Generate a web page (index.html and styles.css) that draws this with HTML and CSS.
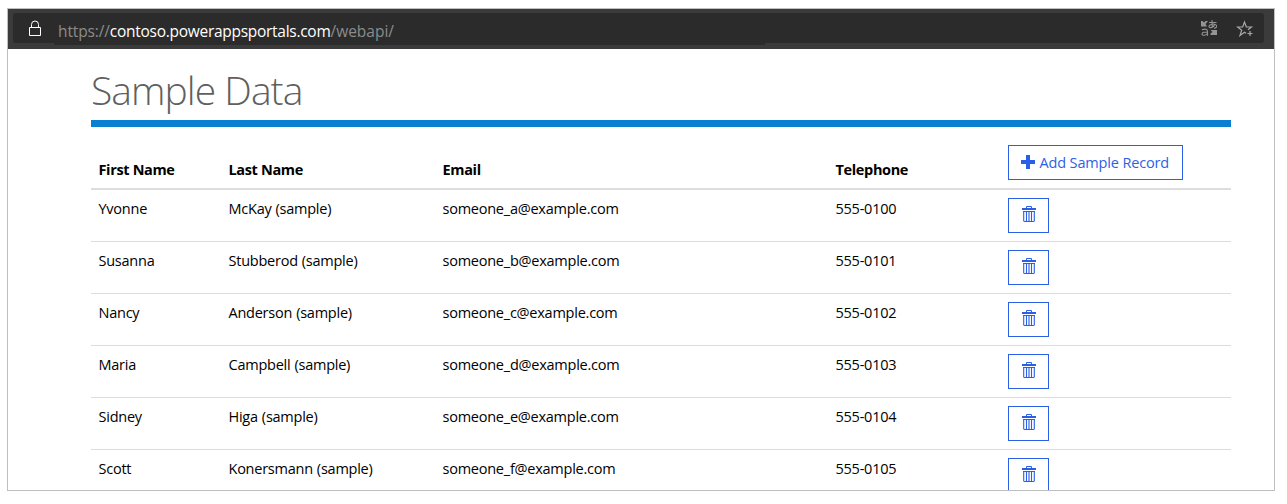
FILE: index.html
```html
<!DOCTYPE html>
<html lang="en">
<head>
<meta charset="utf-8">
<title>Sample Data</title>
<link rel="stylesheet" href="styles.css">
</head>
<body>
<svg class="sprite" aria-hidden="true">
  <symbol id="trash" viewBox="0 0 16 18">
    <path d="M5.500 3V1.500h5V3" fill="none" stroke="currentColor"/>
    <path d="M1 3h14v2H1zM2 6h12v1H2zM3 16h10v1H3z" fill="currentColor"/>
    <path d="M2.700 6v10.500M5.500 6v10.500M8 6v10.500M10.500 6v10.500M13.300 6v10.500" fill="none" stroke="currentColor" stroke-width="1.100"/>
  </symbol>
</svg>
<div class="window">
  <header class="toolbar">
    <div class="address">
      <svg class="lock" viewBox="0 0 14 18"><path d="M1.500 7.500h11v8h-11zM3.500 7.500V4.500a3.500 3.500 0 0 1 7 0v3" fill="none" stroke="currentColor"/></svg>
      <div class="url"><span class="dim scheme">https://</span><span class="host">contoso.powerappsportals.com</span><span class="dim path">/webapi/</span></div>
      <svg class="translate" viewBox="0 0 16 16"><path d="M0 1h1.500L3 2.500 4.500 1H7L4.500 4 6 6.500H0zM16 15h-6.500v-1.500l2-1.500-2-2H16z" fill="currentColor"/><path d="M8 2.500h7.500M11 0c0 3 0 6 .8 7.500M14 4c-1 3.500-6 4.700-6 2.500S14 3 15.300 5.300 14 8 13 8.200M1 9.800c3.500-1.600 5.500-.3 5.500 1.900v4M6.500 12c-3 0-5.500.2-5.500 1.900 0 2 4.500 1.500 5.500-.3" fill="none" stroke="currentColor" stroke-width="1.100"/></svg>
      <svg class="star" viewBox="0 0 18 18"><path d="M10 13.300l-1.500-1L4 15.500l1.700-5.300L1.500 7h5.200L8.500 2l1.800 5h5.200l-3.500 2.800" fill="none" stroke="currentColor" stroke-width="1.200"/><path d="M11.500 13.500h5M14 11v5" fill="none" stroke="currentColor" stroke-width="1.200"/></svg>
    </div>
  </header>
  <main class="page">
    <h1 class="title">Sample Data</h1>
    <table class="records">
      <colgroup><col class="c-first"><col class="c-last"><col class="c-email"><col class="c-phone"><col></colgroup>
      <thead><tr><th>First Name</th><th>Last Name</th><th>Email</th><th>Telephone</th>
      <th class="action"><button class="btn add"><svg class="plus" viewBox="0 0 14 14"><path d="M5 0h4v5h5v4H9v5H5V9H0V5h5z" fill="currentColor"/></svg><span>Add Sample Record</span></button></th></tr></thead>
      <tbody>
        <tr><td>Yvonne</td><td>McKay (sample)</td><td>someone_a@example.com</td><td>555-0100</td><td class="action"><button class="btn del"><svg class="trash"><use href="#trash"/></svg></button></td></tr>
        <tr><td>Susanna</td><td>Stubberod (sample)</td><td>someone_b@example.com</td><td>555-0101</td><td class="action"><button class="btn del"><svg class="trash"><use href="#trash"/></svg></button></td></tr>
        <tr><td>Nancy</td><td>Anderson (sample)</td><td>someone_c@example.com</td><td>555-0102</td><td class="action"><button class="btn del"><svg class="trash"><use href="#trash"/></svg></button></td></tr>
        <tr><td>Maria</td><td>Campbell (sample)</td><td>someone_d@example.com</td><td>555-0103</td><td class="action"><button class="btn del"><svg class="trash"><use href="#trash"/></svg></button></td></tr>
        <tr><td>Sidney</td><td>Higa (sample)</td><td>someone_e@example.com</td><td>555-0104</td><td class="action"><button class="btn del"><svg class="trash"><use href="#trash"/></svg></button></td></tr>
        <tr><td>Scott</td><td>Konersmann (sample)</td><td>someone_f@example.com</td><td>555-0105</td><td class="action"><button class="btn del"><svg class="trash"><use href="#trash"/></svg></button></td></tr>
      </tbody>
    </table>
  </main>
</div>
</body>
</html>
```
FILE: styles.css
```css
* { box-sizing: border-box; }
body { margin: 0; height: 504px; padding: 8px 12px 13px 7px; overflow: hidden; background: #fff; color: #000; font-family: "Open Sans", "Noto Sans", sans-serif; }
.sprite { display: none; }
.window { height: 483px; border: 1px solid #bfbfbf; overflow: hidden; }
.toolbar { height: 40px; padding: 4px 10px 0 5px; background: #3b3b3b; }
.address { display: flex; align-items: center; height: 30px; padding: 0 10px 0 15px; border-radius: 3px; background: #2b2b2b; }
.lock { width: 14px; height: 18px; color: #fff; margin-top: 2px; }
.url { flex: 0 0 711px; width: 711px; height: 32px; align-self: flex-start; margin-left: 12px; padding: 7px 0 0 4px; background: #2b2b2b; font-size: 15.500px; line-height: 23px; white-space: nowrap; color: #fff; }
.dim { color: #8c8c8c; }
.scheme { letter-spacing: -0.130px; }
.host { letter-spacing: -0.280px; }
.translate { width: 16px; height: 16px; margin-left: auto; color: #949494; }
.star { width: 18px; height: 18px; margin: 2px 0 0 19px; color: #a8a8a8; }
.page { padding: 15px 43px 0 83px; }
.title { height: 63px; margin: 0; border-bottom: 7px solid #0a7fd1; font-size: 39px; font-weight: 300; line-height: 51px; letter-spacing: -0.950px; color: #5f5f5f; }
.records { width: 1140px; margin-top: 10px; table-layout: fixed; border-collapse: separate; border-spacing: 0; font-size: 14.500px; line-height: 22px; }
.c-first { width: 130px; }
.c-last { width: 214px; }
.c-email { width: 393px; }
.c-phone { width: 172px; }
.records th { height: 53px; padding: 8px 8px 7px 7.500px; text-align: left; vertical-align: bottom; font-weight: 700; border-bottom: 2px solid #ddd; letter-spacing: -0.350px; }
.records td { height: 52px; padding: 8px 8px 8px 7.500px; vertical-align: top; border-bottom: 1px solid #ddd; letter-spacing: -0.240px; word-spacing: 0.500px; white-space: nowrap; }
.records .action { padding: 8px; }
.btn { display: flex; align-items: center; height: 35px; padding: 0 11px 0 12px; border: 1px solid #2b5fe8; background: #fff; color: #2b5fe8; font: 400 14.500px/20px "Open Sans", "Noto Sans", sans-serif; letter-spacing: -0.150px; white-space: nowrap; }
.add { width: 175px; gap: 5px; }
.plus { width: 14px; height: 14px; flex: none; margin: -2px 0 0 -0.500px; }
.del { width: 41px; padding: 0 0 3px 12px; }
.trash { width: 16px; height: 18px; flex: none; margin-top: -1px; }
```
